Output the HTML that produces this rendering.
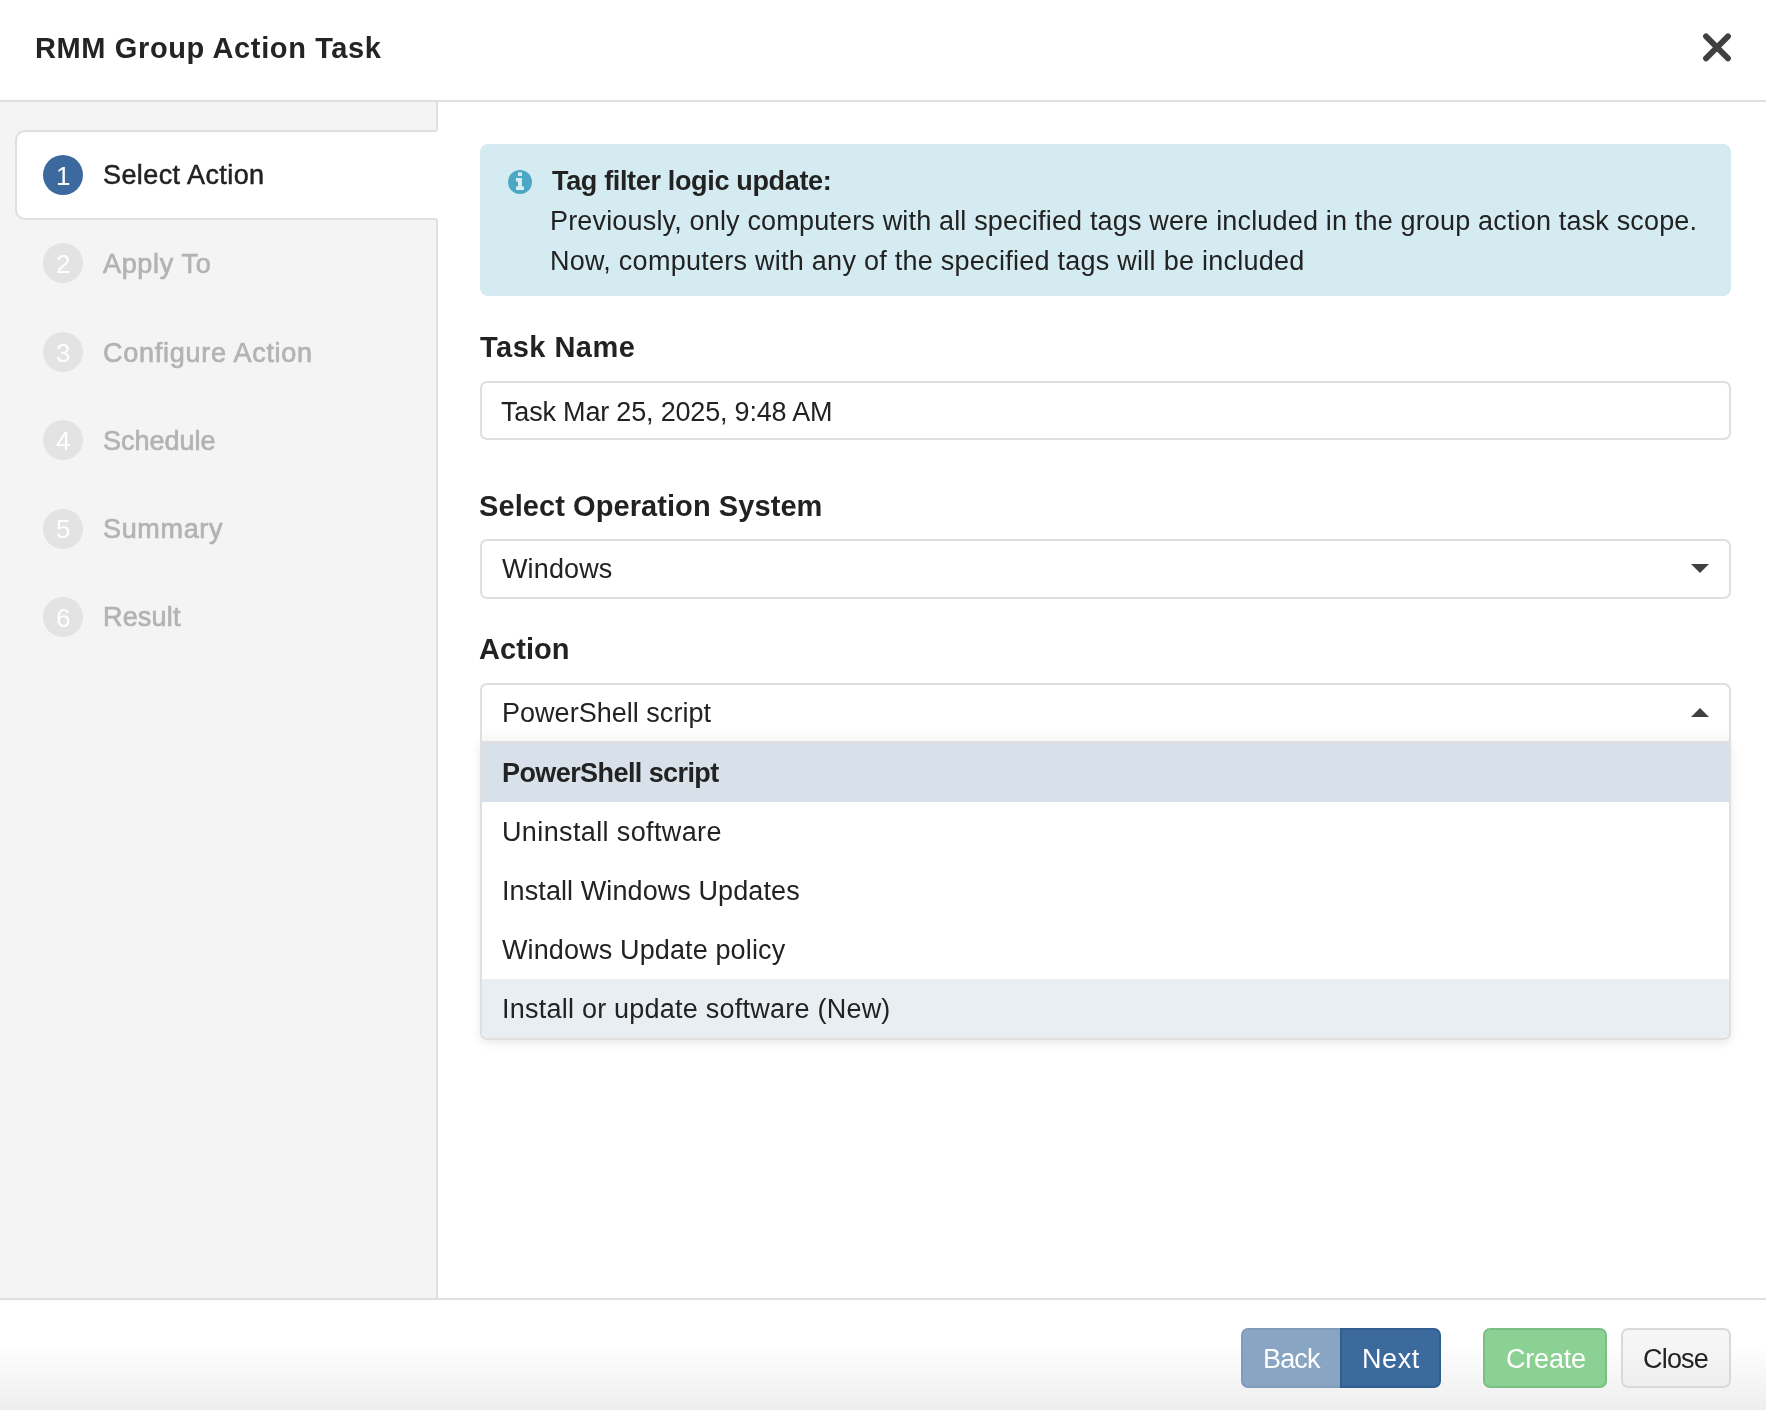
<!DOCTYPE html>
<html>
<head>
<meta charset="utf-8">
<style>
html,body{margin:0;padding:0;}
body{width:1766px;height:1410px;overflow:hidden;background:#fff;font-family:"Liberation Sans",sans-serif;color:#222;position:relative;}
.a{position:absolute;box-sizing:border-box;}
.t{position:absolute;white-space:nowrap;will-change:transform;}
.circ{position:absolute;width:40px;height:40px;border-radius:50%;background:#e3e3e3;}
.box{position:absolute;box-sizing:border-box;left:480px;width:1251px;border:2px solid #dfdfdf;border-radius:7px;background:#fff;}
.opt{position:absolute;left:482px;width:1247px;height:59px;}
</style>
</head>
<body>
<!-- header -->
<div class="a" style="left:0;top:0;width:1766px;height:102px;background:#fff;border-bottom:2px solid #dfdfdf;"></div>
<svg class="a" style="left:1690px;top:20px;" width="60" height="55" viewBox="0 0 60 55">
  <path d="M16 16.4 L38 38.4 M38 16.4 L16 38.4" stroke="#404040" stroke-width="5.8" stroke-linecap="round" fill="none"/>
</svg>

<!-- sidebar -->
<div class="a" style="left:0;top:102px;width:432px;height:1196px;background:#f4f4f4;"></div>
<div class="a" style="left:30px;top:102px;width:408px;height:30px;background:#f4f4f4;border-right:2px solid #dfdfdf;border-bottom:2px solid #dfdfdf;border-bottom-right-radius:3px;"></div>
<div class="a" style="left:30px;top:218px;width:408px;height:1080px;background:#f4f4f4;border-right:2px solid #dfdfdf;border-top:2px solid #dfdfdf;border-top-right-radius:3px;"></div>
<div class="a" style="left:15px;top:130px;width:419px;height:90px;background:#fff;border:2px solid #dfdfdf;border-right:none;border-radius:10px 0 0 10px;"></div>
<div class="a" style="left:432px;top:132px;width:6px;height:86px;background:#fff;"></div>

<div class="circ" style="left:43px;top:155px;background:#3d6a9e;"></div>
<div class="circ" style="left:43px;top:243.4px;"></div>
<div class="circ" style="left:43px;top:331.8px;"></div>
<div class="circ" style="left:43px;top:420.2px;"></div>
<div class="circ" style="left:43px;top:508.6px;"></div>
<div class="circ" style="left:43px;top:597px;"></div>

<!-- info box -->
<div class="a" style="left:480px;top:144px;width:1251px;height:152px;background:#d4ebf1;border-radius:8px;"></div>
<svg class="a" style="left:508px;top:170px;" width="24" height="24" viewBox="0 0 24 24">
  <circle cx="12" cy="12" r="12" fill="#4ba7c3"/>
  <rect x="10" y="2.4" width="4" height="3.5" fill="#d8eef4"/>
  <path d="M8 7.9 H14 V16.6 H16 V20 H8 V16.6 H10 V11.5 H8 Z" fill="#d8eef4"/>
</svg>

<!-- inputs -->
<div class="box" style="top:381px;height:59px;"></div>
<div class="box" style="top:539px;height:60px;"></div>
<svg class="a" style="left:1691px;top:564px;" width="18" height="9" viewBox="0 0 18 9"><path d="M0 0 H18 L9 9 Z" fill="#404040"/></svg>

<!-- action select + dropdown -->
<div class="a" style="left:480px;top:741px;width:1251px;height:299px;border-radius:0 0 7px 7px;box-shadow:0 3px 10px rgba(0,0,0,0.09);"></div>
<div class="box" style="top:683px;height:60px;border-radius:7px 7px 0 0;border-bottom:none;"></div>
<div class="a" style="left:482px;top:728px;width:1247px;height:13px;background:linear-gradient(to bottom,rgba(0,0,0,0),rgba(0,0,0,0.035));"></div>
<svg class="a" style="left:1691px;top:708px;" width="18" height="9" viewBox="0 0 18 9"><path d="M0 9 H18 L9 0 Z" fill="#404040"/></svg>
<div class="box" style="top:741px;height:299px;border-radius:0 0 7px 7px;overflow:hidden;">
</div>
<div class="opt" style="top:743px;height:59px;background:#d8e1ea;"></div>
<div class="opt" style="top:979px;height:59px;background:#e9eef2;border-radius:0 0 5px 5px;"></div>

<!-- footer -->
<div class="a" style="left:0;top:1298px;width:1766px;height:112px;border-top:2px solid #dfdfdf;background:linear-gradient(to bottom,#ffffff 0px,#ffffff 42px,#eeeeee 110px);"></div>
<div class="a" style="left:1241px;top:1328px;width:100px;height:60px;background:#88a5c4;border:2px solid #7f9cbd;border-right:none;border-radius:7px 0 0 7px;"></div>
<div class="a" style="left:1340px;top:1328px;width:101px;height:60px;background:#3c6a9d;border:2px solid #315d90;border-radius:0 7px 7px 0;"></div>
<div class="a" style="left:1483px;top:1328px;width:124px;height:60px;background:#8bd194;border:2px solid #7cbf86;border-radius:7px;"></div>
<div class="a" style="left:1621px;top:1328px;width:110px;height:60px;background:linear-gradient(#f7f7f7,#efefef);border:2px solid #d9d9d9;border-radius:7px;"></div>

<div class="t" style="left:35.0px;top:34.0px;font-size:29px;line-height:29px;font-weight:bold;color:#242424;letter-spacing:0.625px;">RMM Group Action Task</div>
<div class="t" style="left:103.0px;top:162.3px;font-size:27px;line-height:27px;font-weight:normal;color:#222222;letter-spacing:0.417px;-webkit-text-stroke:0.5px #222222;">Select Action</div>
<div class="t" style="left:103.2px;top:251.0px;font-size:27px;line-height:27px;font-weight:normal;color:#b3b3b3;letter-spacing:0.657px;-webkit-text-stroke:0.7px #b3b3b3;">Apply To</div>
<div class="t" style="left:103.0px;top:340.0px;font-size:27px;line-height:27px;font-weight:normal;color:#b3b3b3;letter-spacing:0.733px;-webkit-text-stroke:0.7px #b3b3b3;">Configure Action</div>
<div class="t" style="left:103.0px;top:428.0px;font-size:27px;line-height:27px;font-weight:normal;color:#b3b3b3;letter-spacing:0.000px;-webkit-text-stroke:0.7px #b3b3b3;">Schedule</div>
<div class="t" style="left:103.0px;top:516.0px;font-size:27px;line-height:27px;font-weight:normal;color:#b3b3b3;letter-spacing:0.667px;-webkit-text-stroke:0.7px #b3b3b3;">Summary</div>
<div class="t" style="left:102.9px;top:604.0px;font-size:27px;line-height:27px;font-weight:normal;color:#b3b3b3;letter-spacing:0.180px;-webkit-text-stroke:0.7px #b3b3b3;">Result</div>
<div class="t" style="left:552.1px;top:167.8px;font-size:27px;line-height:27px;font-weight:bold;color:#222222;letter-spacing:-0.339px;">Tag filter logic update:</div>
<div class="t" style="left:550.4px;top:207.6px;font-size:27px;line-height:27px;font-weight:normal;color:#222222;letter-spacing:0.168px;">Previously, only computers with all specified tags were included in the group action task scope.</div>
<div class="t" style="left:550.4px;top:248.4px;font-size:27px;line-height:27px;font-weight:normal;color:#222222;letter-spacing:0.262px;">Now, computers with any of the specified tags will be included</div>
<div class="t" style="left:480.4px;top:332.8px;font-size:29px;line-height:29px;font-weight:bold;color:#222222;letter-spacing:0.487px;">Task Name</div>
<div class="t" style="left:501.3px;top:398.7px;font-size:27px;line-height:27px;font-weight:normal;color:#222222;letter-spacing:-0.184px;">Task Mar 25, 2025, 9:48 AM</div>
<div class="t" style="left:479.0px;top:491.7px;font-size:29px;line-height:29px;font-weight:bold;color:#222222;letter-spacing:0.077px;">Select Operation System</div>
<div class="t" style="left:502.0px;top:556.2px;font-size:27px;line-height:27px;font-weight:normal;color:#222222;letter-spacing:0.133px;">Windows</div>
<div class="t" style="left:479.2px;top:635.0px;font-size:29px;line-height:29px;font-weight:bold;color:#222222;letter-spacing:0.060px;">Action</div>
<div class="t" style="left:502.0px;top:700.0px;font-size:27px;line-height:27px;font-weight:normal;color:#222222;letter-spacing:0.025px;">PowerShell script</div>
<div class="t" style="left:501.8px;top:760.0px;font-size:27px;line-height:27px;font-weight:bold;color:#222222;letter-spacing:-0.581px;">PowerShell script</div>
<div class="t" style="left:502.0px;top:818.8px;font-size:27px;line-height:27px;font-weight:normal;color:#222222;letter-spacing:0.371px;">Uninstall software</div>
<div class="t" style="left:502.0px;top:877.9px;font-size:27px;line-height:27px;font-weight:normal;color:#222222;letter-spacing:0.091px;">Install Windows Updates</div>
<div class="t" style="left:502.0px;top:937.3px;font-size:27px;line-height:27px;font-weight:normal;color:#222222;letter-spacing:0.125px;">Windows Update policy</div>
<div class="t" style="left:502.0px;top:995.9px;font-size:27px;line-height:27px;font-weight:normal;color:#222222;letter-spacing:0.232px;">Install or update software (New)</div>
<div class="t" style="left:1262.6px;top:1345.9px;font-size:27px;line-height:27px;font-weight:normal;color:#ffffff;letter-spacing:-0.867px;">Back</div>
<div class="t" style="left:1362.3px;top:1345.9px;font-size:27px;line-height:27px;font-weight:normal;color:#ffffff;letter-spacing:0.600px;">Next</div>
<div class="t" style="left:1505.5px;top:1345.9px;font-size:27px;line-height:27px;font-weight:normal;color:#ffffff;letter-spacing:-0.200px;">Create</div>
<div class="t" style="left:1643.4px;top:1345.9px;font-size:27px;line-height:27px;font-weight:normal;color:#222222;letter-spacing:-0.800px;">Close</div>
<div class="t" style="left:55.5px;top:162.8px;font-size:26px;line-height:26px;font-weight:normal;color:#ffffff;letter-spacing:0.000px;">1</div>
<div class="t" style="left:56.0px;top:251.0px;font-size:26px;line-height:26px;font-weight:normal;color:#ffffff;letter-spacing:0.000px;">2</div>
<div class="t" style="left:56.0px;top:339.5px;font-size:26px;line-height:26px;font-weight:normal;color:#ffffff;letter-spacing:0.000px;">3</div>
<div class="t" style="left:55.5px;top:427.9px;font-size:26px;line-height:26px;font-weight:normal;color:#ffffff;letter-spacing:0.000px;">4</div>
<div class="t" style="left:55.5px;top:516.3px;font-size:26px;line-height:26px;font-weight:normal;color:#ffffff;letter-spacing:0.000px;">5</div>
<div class="t" style="left:56.0px;top:604.7px;font-size:26px;line-height:26px;font-weight:normal;color:#ffffff;letter-spacing:0.000px;">6</div>
</body>
</html>
